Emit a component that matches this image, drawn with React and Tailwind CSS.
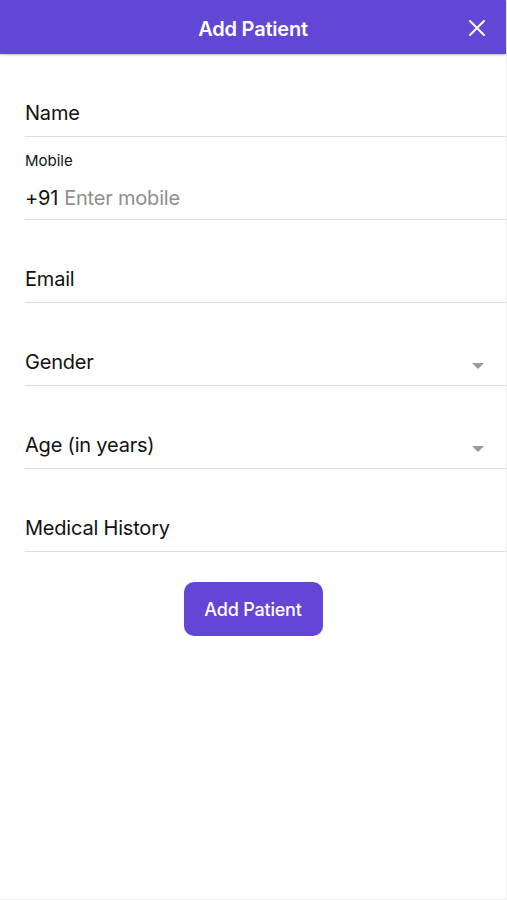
import React from "react";

function Field({ label, arrow }) {
  return (
    <div className="ml-[25px] h-[83px] border-b border-[#dcdcdc] flex items-end pb-[11px]">
      <div className="flex-1 text-[20px] leading-[24px] text-[#111] tracking-[-0.2px]">{label}</div>
      {arrow && (
        <svg width="12" height="7" viewBox="0 0 12 7" className="mr-[22px] mb-[4px]">
          <path d="M0 0 L12 0 L6 6 Z" fill="#9a9a9a" />
        </svg>
      )}
    </div>
  );
}

export default function App() {
  return (
    <div className="w-[507px] h-[900px] bg-white flex flex-col border-b border-r border-[#f0f0f0]" style={{ fontFamily: "Inter, 'Noto Sans', sans-serif" }}>
      <div className="h-[54px] bg-[#6246d6] flex items-center justify-center relative shadow-[0_1px_2px_rgba(0,0,0,0.25)]">
        <div className="text-white text-[20px] font-semibold pt-[3px] tracking-[-0.2px]">Add Patient</div>
        <svg width="16" height="16" viewBox="0 0 16 16" className="absolute right-[21px] top-[20px]">
          <path d="M1 1 L15 15 M15 1 L1 15" stroke="white" strokeWidth="2" strokeLinecap="round" />
        </svg>
      </div>
      <Field label="Name" />
      <div className="ml-[25px] h-[83px] border-b border-[#dcdcdc] flex flex-col">
        <div className="mt-[15px] text-[15px] leading-[18px] text-[#111]">Mobile</div>
        <div className="mt-[16px] text-[20px] leading-[24px] tracking-[-0.2px]">
          <span className="text-[#111]">+91</span>
          <span className="text-[#8e8e8e] ml-[6px]">Enter mobile</span>
        </div>
      </div>
      <Field label="Email" />
      <Field label="Gender" arrow />
      <Field label="Age (in years)" arrow />
      <Field label="Medical History" />
      <div className="flex justify-center mt-[30px]">
        <button className="w-[139px] h-[54px] rounded-[10px] bg-[#6346d6] text-white text-[18px] font-medium tracking-[-0.2px]">Add Patient</button>
      </div>
    </div>
  );
}
